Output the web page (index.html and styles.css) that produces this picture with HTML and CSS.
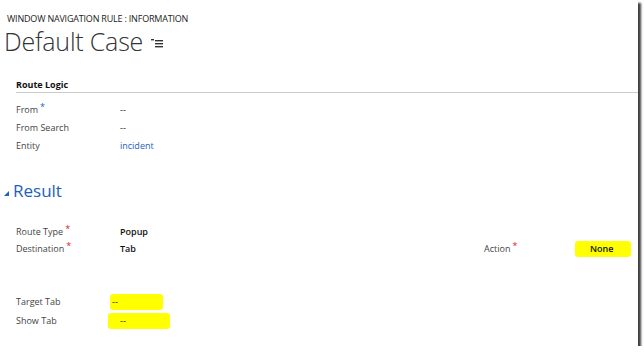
FILE: index.html
```html
<!DOCTYPE html>
<html lang="en">
<head>
  <meta charset="UTF-8">
  <title>Default Case</title>
  <link rel="stylesheet" href="styles.css">
</head>
<body>
  <div class="page">
    <div class="entity-type">WINDOW NAVIGATION RULE : INFORMATION</div>
    <div class="title-row">
      <h1 class="title">Default Case</h1>
      <svg class="menu-icon" width="12" height="9" viewBox="0 0 12 9">
        <rect x="0" y="0" width="3" height="1.4" fill="#333"/>
        <rect x="4" y="1" width="8" height="1.4" fill="#333"/>
        <rect x="4" y="4" width="8" height="1.4" fill="#333"/>
        <rect x="4" y="7" width="8" height="1.4" fill="#333"/>
      </svg>
    </div>

    <div class="section">
      <div class="section-head">Route Logic</div>
      <div class="field">
        <div class="label">From<span class="req blue">*</span></div>
        <div class="value">--</div>
      </div>
      <div class="field">
        <div class="label">From Search</div>
        <div class="value">--</div>
      </div>
      <div class="field">
        <div class="label">Entity</div>
        <div class="value link">incident</div>
      </div>
    </div>

    <div class="tab-head"><span class="caret"></span>Result</div>

    <div class="section result">
      <div class="field">
        <div class="label">Route Type<span class="req">*</span></div>
        <div class="value bold">Popup</div>
      </div>
      <div class="field">
        <div class="label">Destination<span class="req">*</span></div>
        <div class="value bold">Tab</div>
        <div class="label action">Action<span class="req">*</span></div>
        <div class="value bold"><span class="mark mark-none">None</span></div>
      </div>
    </div>

    <div class="section tabs">
      <div class="field">
        <div class="label">Target Tab</div>
        <div class="value"><span class="mark mark-target">--</span></div>
      </div>
      <div class="field">
        <div class="label">Show Tab</div>
        <div class="value"><span class="mark mark-show">--</span></div>
      </div>
    </div>
  </div>
</body>
</html>
```

FILE: styles.css
```css
body {
  margin: 0;
  background: #fff;
  font-family: "Open Sans", "Liberation Sans", sans-serif;
  color: #444;
}
.page {
  width: 638px;
  height: 346px;
  background: #fff;
  box-shadow: 3px 3px 2px rgba(0, 0, 0, 0.75);
  padding-top: 13px;
  box-sizing: border-box;
  overflow: hidden;
}
.entity-type {
  font-size: 9px;
  color: #222;
  padding-left: 7px;
  letter-spacing: -0.2px;
  line-height: 12px;
}
.title-row {
  display: flex;
  align-items: center;
  padding-left: 4px;
  height: 32px;
}
.title {
  margin: 0;
  font-weight: 300;
  font-size: 25px;
  color: #333;
  line-height: 32px;
  letter-spacing: -0.2px;
}
.menu-icon {
  margin-left: 8px;
  margin-top: 4px;
}
.section {
  margin-left: 16px;
}
.section-head {
  margin-top: 21px;
  font-size: 9px;
  font-weight: 700;
  color: #111;
  line-height: 14px;
  border-bottom: 1px solid #ccc;
  padding-bottom: 0;
  margin-bottom: 7px;
}
.field {
  display: flex;
  align-items: center;
  height: 18px;
  font-size: 9px;
}
.label {
  width: 104px;
  flex-shrink: 0;
  color: #444;
}
.value {
  color: #222;
}
.value.bold {
  font-weight: 600;
  color: #111;
}
.field .value.bold:nth-child(2) {
  width: 364px;
  flex-shrink: 0;
}
.link {
  color: #1d61b9;
}
.req {
  color: #d22;
  font-size: 9px;
  vertical-align: top;
  position: relative;
  top: -3px;
  margin-left: 2px;
}
.req.blue {
  color: #1d61b9;
}
.tab-head {
  margin-top: 26px;
  display: flex;
  align-items: center;
  font-size: 17px;
  color: #1d61b9;
  line-height: 22px;
  padding-left: 4px;
}
.caret {
  width: 0;
  height: 0;
  border-left: 5px solid transparent;
  border-bottom: 5px solid #1d61b9;
  margin-right: 4px;
  margin-top: 4px;
}
.result {
  margin-top: 21px;
}
.result .field {
  height: 17px;
}
.action {
  width: 106px;
}
.mark {
  background: #ffff00;
  border-radius: 3px;
  display: inline-block;
  line-height: 12px;
  padding-top: 2px;
  padding-bottom: 2px;
}
.mark-none {
  padding-left: 15px;
  padding-right: 18px;
  margin-left: -15px;
}
.mark-target {
  padding-left: 2px;
  padding-right: 45px;
  margin-left: -10px;
}
.mark-show {
  padding-left: 12px;
  padding-right: 44px;
  margin-left: -12px;
}
.tabs {
  margin-top: 35px;
}
.tabs .field {
  height: 19px;
}
```
